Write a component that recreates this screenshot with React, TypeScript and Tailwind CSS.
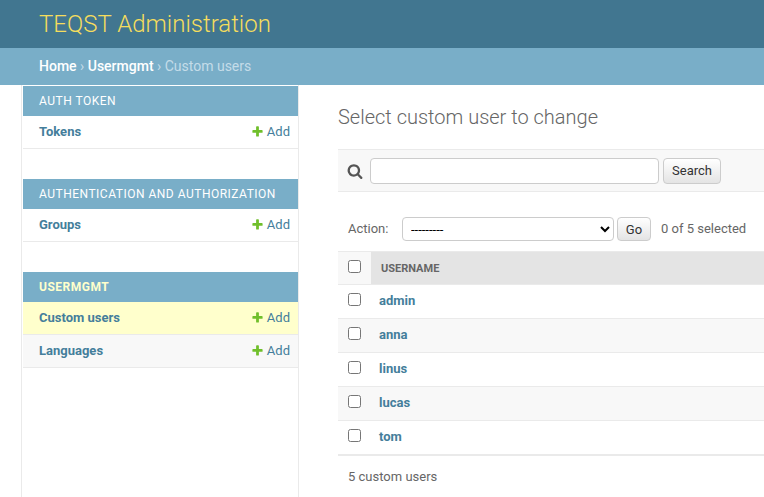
import React from 'react';

type Model = { name: string; current?: boolean; shaded?: boolean };
type AppGroup = { caption: string; current?: boolean; models: Model[] };

const groups: AppGroup[] = [
  { caption: 'Auth Token', models: [{ name: 'Tokens' }] },
  { caption: 'Authentication and Authorization', models: [{ name: 'Groups' }] },
  {
    caption: 'Usermgmt',
    current: true,
    models: [{ name: 'Custom users', current: true }, { name: 'Languages', shaded: true }],
  },
];

const users = ['admin', 'anna', 'linus', 'lucas', 'tom'];

function AddIcon() {
  return (
    <svg viewBox="0 0 1792 1792" className="mr-[3px] mb-px h-[13px] w-[13px]">
      <path
        fill="#70bf2b"
        d="M1600 796v192q0 40-28 68t-68 28h-416v416q0 40-28 68t-68 28h-192q-40 0-68-28t-28-68v-416h-416q-40 0-68-28t-28-68v-192q0-40 28-68t68-28h416v-416q0-40 28-68t68-28h192q40 0 68 28t28 68v416h416q40 0 68 28t28 68z"
      />
    </svg>
  );
}

function SearchIcon() {
  return (
    <svg viewBox="0 0 1792 1792" className="h-4 w-4">
      <path
        fill="#555555"
        d="M1216 832q0-185-131.5-316.5t-316.5-131.5-316.5 131.5-131.5 316.5 131.5 316.5 316.5 131.5 316.5-131.5 131.5-316.5zm512 832q0 52-38 90t-90 38q-54 0-90-38l-343-342q-179 124-399 124-143 0-273.5-55.5t-225-150-150-225-55.5-273.5 55.5-273.5 150-225 225-150 273.5-55.5 273.5 55.5 225 150 150 225 55.5 273.5q0 220-124 399l343 343q37 37 37 90z"
      />
    </svg>
  );
}

function Sidebar() {
  return (
    <nav className="ml-[21px] flex w-[278px] flex-col gap-[30px] border-x border-[#eaeaea] pt-px pl-px">
      {groups.map((group) => (
        <section key={group.caption}>
          <h2
            className={`h-[30px] bg-[#79aec8] pl-4 text-[12px] leading-[30px] tracking-[0.5px] uppercase ${
              group.current ? 'font-bold text-[#ffffcc]' : 'font-normal text-white'
            }`}
          >
            {group.caption}
          </h2>
          {group.models.map((model) => (
            <div
              key={model.name}
              className={`flex h-[33px] items-center justify-between border-b border-[#eaeaea] pr-2 pl-4 ${
                model.current ? 'bg-[#ffffcc]' : model.shaded ? 'bg-[#f8f8f8]' : 'bg-white'
              }`}
            >
              <a className="font-bold">{model.name}</a>
              <a className="flex items-center">
                <AddIcon />
                Add
              </a>
            </div>
          ))}
        </section>
      ))}
    </nav>
  );
}

function Checkbox() {
  return <input type="checkbox" className="m-0 block h-[13px] w-[13px]" />;
}

function ChangeList() {
  return (
    <main className="ml-[39px] min-w-0 flex-1">
      <h1 className="mt-[20px] h-[44px] text-[20px] leading-[24px] font-light text-[#666]">
        Select custom user to change
      </h1>
      <div className="flex h-[43px] items-center border-y border-[#eaeaea] bg-[#f8f8f8] pl-[9px]">
        <SearchIcon />
        <input
          type="text"
          className="ml-[7px] h-[26px] w-[289px] rounded-[4px] border border-[#ccc] bg-white px-[6px]"
        />
        <button className="ml-1 h-[26px] w-[58px] rounded-[4px] border border-[#ccc] bg-linear-to-b from-white to-[#e4e4e4] text-[#333]">
          Search
        </button>
      </div>
      <div className="mt-[25px] flex h-6 items-center pl-[10px] text-[#666]">
        <span className="w-[54px]">Action:</span>
        <select className="h-6 w-[212px] rounded-[4px] border border-[#ccc] bg-white pl-1 text-[13px] text-black">
          <option>---------</option>
        </select>
        <button className="ml-[3px] h-6 w-[34px] rounded-[4px] border border-[#ccc] bg-linear-to-b from-white to-[#e4e4e4] pt-px text-[#333]">
          Go
        </button>
        <span className="ml-[10px]">0 of 5 selected</span>
      </div>
      <div className="mt-[10px] border-b border-[#eaeaea]">
        <div className="flex h-[34px] border-y border-[#eaeaea] bg-[#f8f8f8]">
          <div className="w-[33px] pt-2 pl-[10px]">
            <Checkbox />
          </div>
          <div className="flex-1 bg-[#e4e4e4] pl-[10px] text-[11px] leading-[33px] font-bold text-[#666] uppercase">
            Username
          </div>
        </div>
        {users.map((user) => (
          <div
            key={user}
            className="flex h-[34px] border-b border-[#eaeaea] pl-[10px] even:bg-white odd:bg-[#f8f8f8]"
          >
            <div className="w-[31px] pt-2">
              <Checkbox />
            </div>
            <a className="leading-[31px] font-bold">{user}</a>
          </div>
        ))}
      </div>
      <p className="pt-[13px] pl-[10px] leading-[16px] text-[#666]">5 custom users</p>
    </main>
  );
}

export default function App() {
  return (
    <div className="flex h-[497px] w-full flex-col overflow-hidden bg-white font-['Roboto','Liberation_Sans',sans-serif] text-[13px] text-[#447e9b]">
      <header className="h-12 bg-[#417690] pl-[39px] text-[24px] leading-[48px] font-light text-[#f5dd5d]">
        TEQST Administration
      </header>
      <div className="h-[37px] bg-[#79aec8] pl-[39px] text-[14px] leading-[36px] text-[#c4dce8]">
        <a className="font-medium text-white">Home</a> › <a className="font-medium text-white">Usermgmt</a> › Custom users
      </div>
      <div className="flex min-h-0 flex-1">
        <Sidebar />
        <ChangeList />
      </div>
    </div>
  );
}
